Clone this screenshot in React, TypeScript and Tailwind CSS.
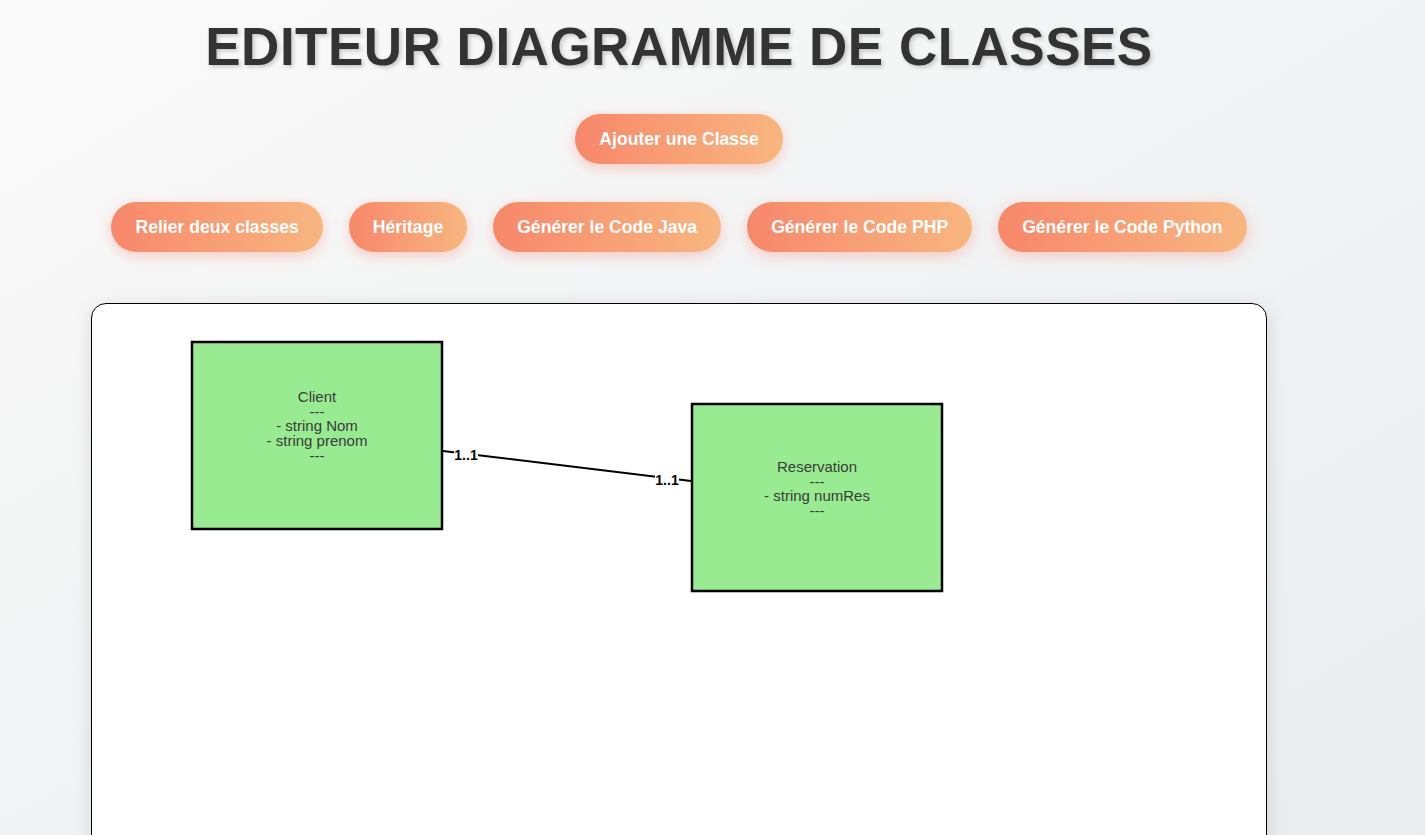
import React from 'react';

const actions = [
  'Relier deux classes',
  'Héritage',
  'Générer le Code Java',
  'Générer le Code PHP',
  'Générer le Code Python',
];

type UmlClass = {
  name: string;
  attrs: string[];
  x: number;
  y: number;
  lines: number[];
};

const classes: UmlClass[] = [
  { name: 'Client', attrs: ['- string Nom', '- string prenom'], x: 100, y: 38, lines: [98, 112.7, 127.4, 142.1, 156.8] },
  { name: 'Reservation', attrs: ['- string numRes'], x: 600, y: 100, lines: [168, 182.7, 197.4, 212.1] },
];

function PillButton({ label }: { label: string }) {
  return (
    <button className="flex h-[50px] items-center rounded-full bg-gradient-to-r from-[#f7876a] to-[#f8b67f] px-[24px] text-[17.6px] font-bold leading-[20px] text-white shadow-[0_4px_14px_rgba(247,120,100,0.35)]">
      {label}
    </button>
  );
}

function Diagram() {
  return (
    <svg width="1174" height="560" className="block" style={{ fontFamily: '"Liberation Sans", Arial, sans-serif' }}>
      {classes.map((c) => {
        const texts = [c.name, '---', ...c.attrs, '---'];
        return (
          <g key={c.name}>
            <rect x={c.x} y={c.y} width={250} height={187} fill="#98eb90" stroke="#000" strokeWidth={2.5} />
            {texts.map((t, i) => (
              <text key={i} x={c.x + 125} y={c.lines[i]} textAnchor="middle" fontSize={15} fill="#3a3a3a">
                {t}
              </text>
            ))}
          </g>
        );
      })}
      {/* association link */}
      <line x1={351} y1={147} x2={599} y2={177} stroke="#000" strokeWidth={2} />
      <rect x={362} y={143} width={24} height={14} fill="#fff" />
      <text x={374} y={156} textAnchor="middle" fontSize={14} fontWeight="bold" fill="#000">1..1</text>
      <rect x={563} y={168} width={24} height={14} fill="#fff" />
      <text x={575} y={181} textAnchor="middle" fontSize={14} fontWeight="bold" fill="#000">1..1</text>
    </svg>
  );
}

export default function App() {
  return (
    <div
      className="h-[835px] overflow-hidden bg-gradient-to-br from-[#fafafa] to-[#eaecee]"
      style={{ fontFamily: '"Liberation Sans", Arial, sans-serif' }}
    >
      <div className="ml-[91px] w-[1176px] pt-[20px]">
        <h1 className="h-[53px] text-center text-[53px] font-bold leading-none tracking-[0.5px] text-[#333] [text-shadow:2px_2px_4px_rgba(0,0,0,0.2)]">
          EDITEUR DIAGRAMME DE CLASSES
        </h1>

        <div className="mt-[41px] flex justify-center">
          <PillButton label="Ajouter une Classe" />
        </div>

        <div className="mt-[38px] flex justify-center gap-[26px]">
          {actions.map((a) => (
            <PillButton key={a} label={a} />
          ))}
        </div>

        <div className="mt-[51px] h-[600px] rounded-[15px] border border-black bg-white shadow-[0_4px_20px_rgba(0,0,0,0.12)]">
          <Diagram />
        </div>
      </div>
    </div>
  );
}
